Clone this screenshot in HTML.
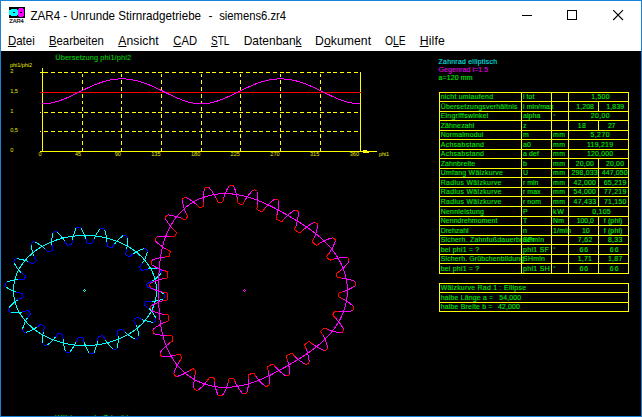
<!DOCTYPE html>
<html><head><meta charset="utf-8"><title>ZAR4 - Unrunde Stirnradgetriebe - siemens6.zr4</title>
<style>
html,body{margin:0;padding:0;background:#000;overflow:hidden}
svg{display:block}
text{white-space:pre}
</style></head><body>
<svg width="642" height="417" viewBox="0 0 642 417">
<rect x="0" y="0" width="642" height="417" fill="#1883d7"/>
<rect x="1" y="1" width="640" height="50" fill="#ffffff"/>
<rect x="1" y="51" width="640" height="365" fill="#000000"/>
<g id="icon">
<rect x="9" y="7" width="16" height="11" fill="#000"/>
<rect x="9" y="10" width="10" height="5" fill="#00ffff"/>
<rect x="11" y="9" width="6" height="7" fill="#00ffff"/>
<rect x="13" y="12" width="2" height="1" fill="#000"/>
<rect x="18" y="9" width="6" height="7" fill="#ff00ff"/>
<rect x="19" y="8" width="4" height="9" fill="#ff00ff"/>
<rect x="20" y="12" width="2" height="1" fill="#000"/>
<text x="9.2" y="23" font-size="5.2" textLength="14.5" lengthAdjust="spacingAndGlyphs" fill="#000" stroke="#000" stroke-width="0.15" font-family='"Liberation Sans", sans-serif'>ZAR4</text>
</g>
<g font-family='"Liberation Sans", sans-serif'>
<text x="30.40" y="19.7" font-size="12.2" fill="#000" textLength="170.70" lengthAdjust="spacingAndGlyphs">ZAR4 - Unrunde Stirnradgetriebe</text>
<text x="208.40" y="19.70" font-size="12.2" fill="#000">-</text>
<text x="219.20" y="19.7" font-size="12.2" fill="#000" textLength="66.90" lengthAdjust="spacingAndGlyphs">siemens6.zr4</text>
<path d="M522 15.5H532" stroke="#000" stroke-width="1" fill="none"/>
<rect x="567.5" y="10.5" width="9" height="9" stroke="#000" stroke-width="1" fill="none"/>
<path d="M613.2 10.2L623 20M623 10.2L613.2 20" stroke="#000" stroke-width="1.1" fill="none"/>
<text x="7.90" y="44.8" font-size="12.2" fill="#000" textLength="26.80" lengthAdjust="spacingAndGlyphs">Datei</text>
<rect x="7.90" y="46" width="8.29" height="1" fill="#000"/>
<text x="49.00" y="44.8" font-size="12.2" fill="#000" textLength="54.80" lengthAdjust="spacingAndGlyphs">Bearbeiten</text>
<rect x="49.00" y="46" width="7.56" height="1" fill="#000"/>
<text x="118.20" y="44.8" font-size="12.2" fill="#000" textLength="40.50" lengthAdjust="spacing">Ansicht</text>
<rect x="118.20" y="46" width="8.14" height="1" fill="#000"/>
<text x="173.30" y="44.8" font-size="12.2" fill="#000" textLength="23.70" lengthAdjust="spacingAndGlyphs">CAD</text>
<rect x="173.30" y="46" width="8.11" height="1" fill="#000"/>
<text x="211.00" y="44.8" font-size="12.2" fill="#000" textLength="18.40" lengthAdjust="spacingAndGlyphs">STL</text>
<rect x="211.00" y="46" width="6.69" height="1" fill="#000"/>
<text x="243.70" y="44.8" font-size="12.2" fill="#000" textLength="57.90" lengthAdjust="spacingAndGlyphs">Datenbank</text>
<rect x="295.61" y="46" width="5.99" height="1" fill="#000"/>
<text x="315.00" y="44.8" font-size="12.2" fill="#000" textLength="56.10" lengthAdjust="spacing">Dokument</text>
<rect x="323.88" y="46" width="6.79" height="1" fill="#000"/>
<text x="385.10" y="44.8" font-size="12.2" fill="#000" textLength="20.60" lengthAdjust="spacingAndGlyphs">OLE</text>
<rect x="393.11" y="46" width="5.73" height="1" fill="#000"/>
<text x="419.70" y="44.8" font-size="12.2" fill="#000" textLength="25.20" lengthAdjust="spacing">Hilfe</text>
<rect x="419.70" y="46" width="8.81" height="1" fill="#000"/>
</g>
<g id="plot" fill="none" stroke-width="1" shape-rendering="crispEdges">
<path d="M40.4 131.75H360.0" stroke="#ffff00" stroke-dasharray="4 2.73" stroke-dashoffset="3.06"/>
<path d="M40.4 112.00H360.0" stroke="#ffff00" stroke-dasharray="4 2.73" stroke-dashoffset="3.06"/>
<path d="M40.4 72.50H360.0" stroke="#ffff00" stroke-dasharray="4 2.73" stroke-dashoffset="3.06"/>
<path d="M82.19 151.5V72.50" stroke="#ffff00" stroke-dasharray="3.6 3.15"/>
<path d="M121.88 151.5V72.50" stroke="#ffff00" stroke-dasharray="3.6 3.15"/>
<path d="M161.56 151.5V72.50" stroke="#ffff00" stroke-dasharray="3.6 3.15"/>
<path d="M201.25 151.5V72.50" stroke="#ffff00" stroke-dasharray="3.6 3.15"/>
<path d="M240.94 151.5V72.50" stroke="#ffff00" stroke-dasharray="3.6 3.15"/>
<path d="M280.62 151.5V72.50" stroke="#ffff00" stroke-dasharray="3.6 3.15"/>
<path d="M320.31 151.5V72.50" stroke="#ffff00" stroke-dasharray="3.6 3.15"/>
<path d="M42.5 68V152M40.4 151.5H377M360.5 72.00V152" stroke="#ffff00"/>
<path d="M42.5 68L41.2 73H43.8Z" fill="#ffff00" stroke="none"/>
<path d="M374 151.5L363 150V153.6Z" fill="#ffff00" stroke="none"/>
<path d="M40.4 92.25H360.5" stroke="#ff0000"/>
<path d="M42.50 103.79L44.26 103.76L46.03 103.66L47.79 103.48L49.56 103.24L51.32 102.94L53.08 102.57L54.85 102.14L56.61 101.66L58.38 101.12L60.14 100.52L61.90 99.89L63.67 99.20L65.43 98.48L67.19 97.73L68.96 96.94L70.72 96.13L72.49 95.30L74.25 94.46L76.01 93.60L77.78 92.73L79.54 91.86L81.31 90.99L83.07 90.13L84.83 89.28L86.60 88.44L88.36 87.61L90.12 86.81L91.89 86.03L93.65 85.28L95.42 84.56L97.18 83.87L98.94 83.22L100.71 82.60L102.47 82.03L104.24 81.50L106.00 81.01L107.76 80.57L109.53 80.18L111.29 79.84L113.06 79.55L114.82 79.31L116.58 79.12L118.35 78.99L120.11 78.90L121.88 78.88L123.64 78.90L125.40 78.99L127.17 79.12L128.93 79.31L130.69 79.55L132.46 79.84L134.22 80.18L135.99 80.57L137.75 81.01L139.51 81.50L141.28 82.03L143.04 82.60L144.81 83.22L146.57 83.87L148.33 84.56L150.10 85.28L151.86 86.03L153.62 86.81L155.39 87.61L157.15 88.44L158.92 89.28L160.68 90.13L162.44 90.99L164.21 91.86L165.97 92.73L167.74 93.60L169.50 94.46L171.26 95.30L173.03 96.13L174.79 96.94L176.56 97.73L178.32 98.48L180.08 99.20L181.85 99.89L183.61 100.52L185.38 101.12L187.14 101.66L188.90 102.14L190.67 102.57L192.43 102.94L194.19 103.24L195.96 103.48L197.72 103.66L199.49 103.76L201.25 103.79L203.01 103.76L204.78 103.66L206.54 103.48L208.31 103.24L210.07 102.94L211.83 102.57L213.60 102.14L215.36 101.66L217.12 101.12L218.89 100.52L220.65 99.89L222.42 99.20L224.18 98.48L225.94 97.73L227.71 96.94L229.47 96.13L231.24 95.30L233.00 94.46L234.76 93.60L236.53 92.73L238.29 91.86L240.06 90.99L241.82 90.13L243.58 89.28L245.35 88.44L247.11 87.61L248.88 86.81L250.64 86.03L252.40 85.28L254.17 84.56L255.93 83.87L257.69 83.22L259.46 82.60L261.22 82.03L262.99 81.50L264.75 81.01L266.51 80.57L268.28 80.18L270.04 79.84L271.81 79.55L273.57 79.31L275.33 79.12L277.10 78.99L278.86 78.90L280.62 78.88L282.39 78.90L284.15 78.99L285.92 79.12L287.68 79.31L289.44 79.55L291.21 79.84L292.97 80.18L294.74 80.57L296.50 81.01L298.26 81.50L300.03 82.03L301.79 82.60L303.56 83.22L305.32 83.87L307.08 84.56L308.85 85.28L310.61 86.03L312.38 86.81L314.14 87.61L315.90 88.44L317.67 89.28L319.43 90.13L321.19 90.99L322.96 91.86L324.72 92.73L326.49 93.60L328.25 94.46L330.01 95.30L331.78 96.13L333.54 96.94L335.31 97.73L337.07 98.48L338.83 99.20L340.60 99.89L342.36 100.52L344.12 101.12L345.89 101.66L347.65 102.14L349.42 102.57L351.18 102.94L352.94 103.24L354.71 103.48L356.47 103.66L358.24 103.76L360.00 103.79" stroke="#ff00ff"/>
</g>
<g font-family='"Liberation Sans", sans-serif'>
<text x="55.30" y="60.20" font-size="7.4" fill="#00e000" textLength="75.70" lengthAdjust="spacing">Übersetzung phi1/phi2</text>
<text x="10.00" y="66.70" font-size="5.6" fill="#e8e800" textLength="22.00" lengthAdjust="spacing">phi1/phi2</text>
<text x="10.20" y="73.10" font-size="5.6" fill="#e8e800">2</text>
<text x="10.20" y="92.85" font-size="5.6" fill="#e8e800">1,5</text>
<text x="10.20" y="112.60" font-size="5.6" fill="#e8e800">1</text>
<text x="10.20" y="132.35" font-size="5.6" fill="#e8e800">0,5</text>
<text x="10.20" y="152.10" font-size="5.6" fill="#e8e800">0</text>
<text x="41.50" y="156.00" font-size="5.6" fill="#e8e800" text-anchor="end">0</text>
<text x="81.19" y="156.00" font-size="5.6" fill="#e8e800" text-anchor="end">45</text>
<text x="120.88" y="156.00" font-size="5.6" fill="#e8e800" text-anchor="end">90</text>
<text x="160.56" y="156.00" font-size="5.6" fill="#e8e800" text-anchor="end">135</text>
<text x="200.25" y="156.00" font-size="5.6" fill="#e8e800" text-anchor="end">180</text>
<text x="239.94" y="156.00" font-size="5.6" fill="#e8e800" text-anchor="end">225</text>
<text x="279.62" y="156.00" font-size="5.6" fill="#e8e800" text-anchor="end">270</text>
<text x="319.31" y="156.00" font-size="5.6" fill="#e8e800" text-anchor="end">315</text>
<text x="359.00" y="156.00" font-size="5.6" fill="#e8e800" text-anchor="end">360</text>
<text x="379.00" y="156.00" font-size="5.6" fill="#e8e800" textLength="10.00" lengthAdjust="spacing">phi1</text>
</g>
<g id="gears" fill="none" stroke-width="1" stroke-linejoin="round" shape-rendering="crispEdges">
<path d="M163.99 293.92L164.82 295.45L164.57 297.53L163.41 298.82M152.03 301.44L150.20 301.47L148.39 301.40L146.59 301.21L145.71 301.79L144.57 304.34L144.85 305.35L146.33 306.39L147.75 307.52L149.11 308.74M155.98 318.19L156.01 319.92L154.84 321.65L153.22 322.25M141.84 319.41L140.37 318.76L138.93 318.05L137.54 317.27L136.46 317.43L134.07 319.57L133.91 320.65L134.69 322.03L135.42 323.47L136.08 324.94M138.97 336.30L138.38 337.92L136.66 339.10L134.95 339.06M125.29 332.36L124.22 331.36L123.19 330.34L122.21 329.28L121.10 329.08L117.96 330.50L117.45 331.51L117.69 332.93L117.88 334.37L118.02 335.82M117.45 347.57L116.45 348.95L114.46 349.60L112.84 349.07M105.43 339.91L104.70 338.73L104.01 337.53L103.36 336.32L102.33 335.82L98.85 336.44L98.08 337.30L97.92 338.66L97.73 340.02L97.49 341.39M94.00 352.65L92.69 353.73L90.60 353.87L89.17 352.96M84.22 342.26L83.80 340.95L83.43 339.64L83.09 338.33L82.21 337.58L78.66 337.40L77.70 338.04L77.22 339.32L76.71 340.58L76.15 341.83M70.07 351.93L68.54 352.68L66.48 352.31L65.30 351.09M63.07 339.53L62.99 338.12L62.96 336.71L62.97 335.32L62.30 334.39L58.94 333.40L57.86 333.78L57.07 334.93L56.23 336.05L55.36 337.16M46.90 345.35L45.22 345.68L43.33 344.79L42.49 343.30M43.41 331.59L43.76 330.11L44.17 328.66L44.63 327.23L44.26 326.18L41.40 324.41L40.29 324.46L39.13 325.41L37.93 326.33L36.69 327.20M26.14 332.37L24.44 332.14L22.92 330.70L22.58 329.01M27.23 318.26L28.19 316.85L29.21 315.50L30.30 314.21L30.34 313.14L28.44 310.77L27.43 310.42L25.84 310.98L24.21 311.46L22.55 311.85M10.85 312.38L9.39 311.46L8.59 309.53L8.97 307.83M17.63 300.00L19.27 299.06L20.96 298.24L22.70 297.53L23.18 296.62L22.74 294.00L22.02 293.26L20.16 293.05L18.31 292.71L16.47 292.26M6.01 287.08L5.18 285.55L5.43 283.47L6.59 282.18M17.97 279.56L19.80 279.53L21.61 279.60L23.41 279.79L24.29 279.21L25.43 276.66L25.15 275.65L23.67 274.61L22.25 273.48L20.89 272.26M14.02 262.81L13.99 261.08L15.16 259.35L16.78 258.75M28.16 261.59L29.63 262.24L31.07 262.95L32.46 263.73L33.54 263.57L35.93 261.43L36.09 260.35L35.31 258.97L34.58 257.53L33.92 256.06M31.03 244.70L31.62 243.08L33.34 241.90L35.05 241.94M44.71 248.64L45.78 249.64L46.81 250.66L47.79 251.72L48.90 251.92L52.04 250.50L52.55 249.49L52.31 248.07L52.12 246.63L51.98 245.18M52.55 233.43L53.55 232.05L55.54 231.40L57.16 231.93M64.57 241.09L65.30 242.27L65.99 243.47L66.64 244.68L67.67 245.18L71.15 244.56L71.92 243.70L72.08 242.34L72.27 240.98L72.51 239.61M76.00 228.35L77.31 227.27L79.40 227.13L80.83 228.04M85.78 238.74L86.20 240.05L86.57 241.36L86.91 242.67L87.79 243.42L91.34 243.60L92.30 242.96L92.78 241.68L93.29 240.42L93.85 239.17M99.93 229.07L101.46 228.32L103.52 228.69L104.70 229.91M106.93 241.47L107.01 242.88L107.04 244.29L107.03 245.68L107.70 246.61L111.06 247.60L112.14 247.22L112.93 246.07L113.77 244.95L114.64 243.84M123.10 235.65L124.78 235.32L126.67 236.21L127.51 237.70M126.59 249.41L126.24 250.89L125.83 252.34L125.37 253.77L125.74 254.82L128.60 256.59L129.71 256.54L130.87 255.59L132.07 254.67L133.31 253.80M143.86 248.63L145.56 248.86L147.08 250.30L147.42 251.99M142.77 262.74L141.81 264.15L140.79 265.50L139.70 266.79L139.66 267.86L141.56 270.23L142.57 270.58L144.16 270.02L145.79 269.54L147.45 269.15M159.15 268.62L160.61 269.54L161.41 271.47L161.03 273.17M152.37 281.00L150.73 281.94L149.04 282.76L147.30 283.47L146.82 284.38L147.26 287.00L147.98 287.74L149.84 287.95L151.69 288.29L153.53 288.74" stroke="#0000ff"/>
<path d="M150.64 283.13L149.93 284.35L149.90 286.44L150.59 287.67M163.03 292.33L164.26 292.58L165.49 292.79L166.72 292.97L167.51 293.76L167.55 299.18L166.80 300.00L165.57 300.23L164.35 300.49L163.13 300.79M150.89 305.95L150.25 307.20L150.36 309.29L151.13 310.47M163.85 314.32L165.09 314.49L166.33 314.62L167.57 314.71L168.41 315.45L168.80 320.16L168.17 321.08L167.00 321.48L165.82 321.92L164.66 322.39M153.29 329.26L152.84 330.60L153.25 332.65L154.18 333.71M167.32 335.68L168.58 335.66L169.82 335.61L171.06 335.53L172.00 336.14L173.04 339.83L172.66 340.88L171.62 341.56L170.59 342.27L169.58 343.01M160.25 352.48L160.15 353.88L161.05 355.77L162.21 356.57M175.43 355.23L176.64 354.91L177.84 354.56L179.02 354.17L180.08 354.53L181.79 357.18L181.77 358.30L181.01 359.27L180.27 360.28L179.55 361.31M173.81 373.30L174.17 374.66L175.64 376.15L176.99 376.53M189.06 370.97L190.10 370.27L191.12 369.54L192.11 368.79L193.23 368.79L195.53 370.42L195.92 371.47L195.56 372.66L195.24 373.86L194.95 375.08M193.96 388.34L194.79 389.47L196.69 390.33L198.10 390.19M207.32 380.62L208.03 379.59L208.72 378.54L209.37 377.48L210.41 377.07L213.29 377.70L214.02 378.55L214.10 379.79L214.22 381.03L214.37 382.28M218.07 395.04L219.24 395.82L221.33 395.96L222.59 395.34M227.89 383.15L228.21 381.94L228.48 380.72L228.72 379.50L229.55 378.75L233.01 378.31L233.96 378.91L234.39 380.08L234.86 381.24L235.36 382.39M242.56 393.56L243.91 393.97L245.94 393.50L246.98 392.54M248.57 379.35L248.52 378.10L248.43 376.85L248.31 375.61L248.90 374.66L252.91 373.10L253.96 373.51L254.60 374.58L255.28 375.62L256.00 376.65M265.21 386.24L266.61 386.38L268.52 385.53L269.35 384.39M268.38 371.14L268.09 369.91L267.77 368.71L267.41 367.52L267.80 366.47L272.36 364.01L273.43 364.32L274.17 365.32L274.95 366.30L275.76 367.26M285.81 375.95L287.22 375.96L289.04 374.94L289.76 373.73M287.57 360.63L287.18 359.44L286.74 358.26L286.28 357.11L286.57 356.03L291.24 353.28L292.33 353.53L293.14 354.47L293.97 355.40L294.84 356.31M305.44 364.33L306.84 364.25L308.60 363.11L309.24 361.85M306.20 348.92L305.73 347.76L305.22 346.62L304.68 345.49L304.90 344.40L308.78 341.70L309.89 341.79L310.83 342.61L311.79 343.40L312.78 344.17M324.42 350.58L325.80 350.30L327.37 348.91L327.83 347.58M322.95 335.22L322.31 334.14L321.65 333.08L320.95 332.05L321.01 330.94L323.68 328.19L324.78 327.99L325.89 328.56L327.02 329.09L328.17 329.59M341.03 332.92L342.30 332.31L343.48 330.59L343.59 329.18M335.82 318.41L334.93 317.52L334.02 316.66L333.09 315.83L332.88 314.73L334.31 311.92L335.29 311.38L336.52 311.55L337.76 311.69L339.01 311.79M352.26 310.76L353.26 309.77L353.81 307.75L353.46 306.39M342.60 298.73L341.48 298.17L340.34 297.66L339.19 297.18L338.63 296.21L338.89 293.40L339.60 292.53L340.81 292.25L342.02 291.93L343.22 291.57M355.19 285.79L355.76 284.50L355.54 282.43L354.72 281.28M341.82 278.09L340.57 277.98L339.32 277.91L338.08 277.88L337.20 277.19L336.31 274.37L336.68 273.32L337.71 272.63L338.73 271.90L339.73 271.15M348.94 261.57L349.03 260.16L348.10 258.29L346.93 257.50M333.73 259.00L332.52 259.34L331.33 259.71L330.15 260.11L329.09 259.76L326.97 256.98L327.03 255.86L327.82 254.91L328.59 253.92L329.33 252.91M335.42 241.10L335.10 239.72L333.67 238.19L332.33 237.78M320.11 242.99L319.04 243.65L318.01 244.35L317.00 245.07L315.88 245.05L312.52 242.34L312.36 241.23L312.96 240.14L313.52 239.03L314.06 237.89M317.76 225.13L317.18 223.85L315.49 222.62L314.09 222.47M303.10 229.93L302.18 230.78L301.30 231.67L300.44 232.57L299.34 232.76L294.93 230.04L294.67 228.95L295.16 227.81L295.62 226.65L296.05 225.47M298.56 212.42L297.87 211.19L296.08 210.13L294.67 210.10M284.40 218.54L283.57 219.48L282.77 220.44L282.01 221.42L280.92 221.71L276.21 219.03L275.88 217.97L276.30 216.79L276.68 215.61L277.03 214.40M278.69 201.22L277.92 200.04L276.06 199.09L274.65 199.16M264.96 208.25L264.19 209.24L263.45 210.25L262.75 211.28L261.69 211.64L257.42 209.62L256.94 208.61L257.18 207.39L257.39 206.16L257.56 204.92M257.30 191.63L256.36 190.58L254.38 189.91L253.00 190.18M244.73 200.58L244.11 201.67L243.53 202.78L242.98 203.90L241.98 204.40L238.27 203.46L237.55 202.60L237.49 201.36L237.39 200.12L237.25 198.87M233.70 186.06L232.54 185.27L230.46 185.11L229.18 185.72M223.73 197.84L223.41 199.05L223.12 200.26L222.86 201.48L222.02 202.22L218.88 202.38L217.92 201.80L217.45 200.65L216.95 199.51L216.41 198.37M208.89 187.42L207.53 187.05L205.51 187.58L204.50 188.56M203.30 201.80L203.39 203.05L203.51 204.29L203.67 205.53L203.11 206.50L200.55 207.68L199.45 207.49L198.59 206.59L197.71 205.71L196.80 204.85M185.81 197.38L184.40 197.53L182.71 198.76L182.14 200.04M185.83 212.81L186.36 213.94L186.93 215.06L187.53 216.15L187.36 217.25L185.38 219.44L184.28 219.65L183.16 219.10L182.03 218.58L180.87 218.09M167.97 214.92L166.71 215.55L165.55 217.29L165.45 218.70M173.36 229.37L174.26 230.25L175.18 231.10L176.12 231.91L176.35 233.01L175.00 236.23L174.01 236.75L172.78 236.54L171.54 236.37L170.29 236.23M157.02 236.88L156.00 237.84L155.38 239.84L155.69 241.21M166.33 249.19L167.44 249.77L168.56 250.32L169.69 250.83L170.23 251.82L169.56 256.08L168.69 256.77L167.44 256.80L166.20 256.87L164.95 256.97M152.04 260.15L151.22 261.30L151.00 263.37L151.57 264.66M163.53 270.45L164.74 270.81L165.94 271.13L167.15 271.42L167.87 272.28L167.72 277.47L166.91 278.24L165.67 278.38L164.44 278.56L163.20 278.78" stroke="#ff0000"/>
<path d="M156.55 290.50L156.54 291.19L156.53 291.88L156.50 292.57L156.46 293.26L156.41 293.95L156.35 294.64L156.27 295.33L156.19 296.02L156.09 296.71L155.99 297.40L155.87 298.08L155.74 298.77L155.60 299.45L155.45 300.13L155.28 300.81L155.11 301.49L154.92 302.16L154.73 302.84L154.52 303.51L154.30 304.18L154.07 304.85L153.83 305.52L153.58 306.18L153.32 306.84L153.05 307.50L152.76 308.16L152.47 308.81L152.17 309.46L151.85 310.11L151.53 310.75L151.19 311.40L150.84 312.03L150.49 312.67L150.12 313.30L149.74 313.93L149.35 314.55L148.95 315.17L148.55 315.79L148.13 316.40L147.70 317.01L147.26 317.61L146.81 318.21L146.36 318.80L145.89 319.40L145.41 319.98L144.93 320.56L144.43 321.14L143.92 321.71L143.41 322.28L142.89 322.84L142.35 323.40L141.81 323.95L141.26 324.49L140.70 325.04L140.13 325.57L139.55 326.10L138.97 326.63L138.37 327.14L137.77 327.66L137.16 328.16L136.54 328.66L135.91 329.16L135.27 329.65L134.63 330.13L133.98 330.61L133.32 331.08L132.65 331.54L131.98 332.00L131.30 332.45L130.61 332.89L129.91 333.33L129.21 333.76L128.50 334.19L127.78 334.60L127.06 335.01L126.33 335.41L125.59 335.81L124.84 336.20L124.09 336.58L123.34 336.95L122.58 337.32L121.81 337.68L121.03 338.03L120.25 338.38L119.47 338.71L118.68 339.04L117.88 339.37L117.08 339.68L116.28 339.99L115.46 340.28L114.65 340.57L113.83 340.86L113.00 341.13L112.17 341.40L111.34 341.66L110.50 341.91L109.66 342.15L108.81 342.38L107.96 342.61L107.11 342.83L106.25 343.04L105.39 343.24L104.53 343.43L103.66 343.62L102.79 343.79L101.92 343.96L101.05 344.12L100.17 344.27L99.29 344.41L98.41 344.55L97.52 344.67L96.64 344.79L95.75 344.90L94.86 345.00L93.97 345.09L93.07 345.17L92.18 345.24L91.29 345.31L90.39 345.36L89.49 345.41L88.59 345.45L87.70 345.48L86.80 345.50L85.90 345.52L85.00 345.52L84.10 345.52L83.20 345.50L82.30 345.48L81.41 345.45L80.51 345.41L79.61 345.36L78.71 345.31L77.82 345.24L76.93 345.17L76.03 345.09L75.14 345.00L74.25 344.90L73.36 344.79L72.48 344.67L71.59 344.55L70.71 344.41L69.83 344.27L68.95 344.12L68.08 343.96L67.21 343.79L66.34 343.62L65.47 343.43L64.61 343.24L63.75 343.04L62.89 342.83L62.04 342.61L61.19 342.38L60.34 342.15L59.50 341.91L58.66 341.66L57.83 341.40L57.00 341.13L56.17 340.86L55.35 340.57L54.54 340.28L53.72 339.99L52.92 339.68L52.12 339.37L51.32 339.04L50.53 338.71L49.75 338.38L48.97 338.03L48.19 337.68L47.42 337.32L46.66 336.95L45.91 336.58L45.16 336.20L44.41 335.81L43.67 335.41L42.94 335.01L42.22 334.60L41.50 334.19L40.79 333.76L40.09 333.33L39.39 332.89L38.70 332.45L38.02 332.00L37.35 331.54L36.68 331.08L36.02 330.61L35.37 330.13L34.73 329.65L34.09 329.16L33.46 328.66L32.84 328.16L32.23 327.66L31.63 327.14L31.03 326.63L30.45 326.10L29.87 325.57L29.30 325.04L28.74 324.49L28.19 323.95L27.65 323.40L27.11 322.84L26.59 322.28L26.08 321.71L25.57 321.14L25.07 320.56L24.59 319.98L24.11 319.40L23.64 318.80L23.19 318.21L22.74 317.61L22.30 317.01L21.87 316.40L21.45 315.79L21.05 315.17L20.65 314.55L20.26 313.93L19.88 313.30L19.51 312.67L19.16 312.03L18.81 311.40L18.47 310.75L18.15 310.11L17.83 309.46L17.53 308.81L17.24 308.16L16.95 307.50L16.68 306.84L16.42 306.18L16.17 305.52L15.93 304.85L15.70 304.18L15.48 303.51L15.27 302.84L15.08 302.16L14.89 301.49L14.72 300.81L14.55 300.13L14.40 299.45L14.26 298.77L14.13 298.08L14.01 297.40L13.91 296.71L13.81 296.02L13.73 295.33L13.65 294.64L13.59 293.95L13.54 293.26L13.50 292.57L13.47 291.88L13.46 291.19L13.45 290.50L13.46 289.81L13.47 289.12L13.50 288.43L13.54 287.74L13.59 287.05L13.65 286.36L13.73 285.67L13.81 284.98L13.91 284.29L14.01 283.60L14.13 282.92L14.26 282.23L14.40 281.55L14.55 280.87L14.72 280.19L14.89 279.51L15.08 278.84L15.27 278.16L15.48 277.49L15.70 276.82L15.93 276.15L16.17 275.48L16.42 274.82L16.68 274.16L16.95 273.50L17.24 272.84L17.53 272.19L17.83 271.54L18.15 270.89L18.47 270.25L18.81 269.60L19.16 268.97L19.51 268.33L19.88 267.70L20.26 267.07L20.65 266.45L21.05 265.83L21.45 265.21L21.87 264.60L22.30 263.99L22.74 263.39L23.19 262.79L23.64 262.20L24.11 261.60L24.59 261.02L25.07 260.44L25.57 259.86L26.08 259.29L26.59 258.72L27.11 258.16L27.65 257.60L28.19 257.05L28.74 256.51L29.30 255.96L29.87 255.43L30.45 254.90L31.03 254.37L31.63 253.86L32.23 253.34L32.84 252.84L33.46 252.34L34.09 251.84L34.73 251.35L35.37 250.87L36.02 250.39L36.68 249.92L37.35 249.46L38.02 249.00L38.70 248.55L39.39 248.11L40.09 247.67L40.79 247.24L41.50 246.81L42.22 246.40L42.94 245.99L43.67 245.59L44.41 245.19L45.16 244.80L45.91 244.42L46.66 244.05L47.42 243.68L48.19 243.32L48.97 242.97L49.75 242.62L50.53 242.29L51.32 241.96L52.12 241.63L52.92 241.32L53.72 241.01L54.54 240.72L55.35 240.43L56.17 240.14L57.00 239.87L57.83 239.60L58.66 239.34L59.50 239.09L60.34 238.85L61.19 238.62L62.04 238.39L62.89 238.17L63.75 237.96L64.61 237.76L65.47 237.57L66.34 237.38L67.21 237.21L68.08 237.04L68.95 236.88L69.83 236.73L70.71 236.59L71.59 236.45L72.48 236.33L73.36 236.21L74.25 236.10L75.14 236.00L76.03 235.91L76.93 235.83L77.82 235.76L78.71 235.69L79.61 235.64L80.51 235.59L81.41 235.55L82.30 235.52L83.20 235.50L84.10 235.48L85.00 235.48L85.90 235.48L86.80 235.50L87.70 235.52L88.59 235.55L89.49 235.59L90.39 235.64L91.29 235.69L92.18 235.76L93.07 235.83L93.97 235.91L94.86 236.00L95.75 236.10L96.64 236.21L97.52 236.33L98.41 236.45L99.29 236.59L100.17 236.73L101.05 236.88L101.92 237.04L102.79 237.21L103.66 237.38L104.53 237.57L105.39 237.76L106.25 237.96L107.11 238.17L107.96 238.39L108.81 238.62L109.66 238.85L110.50 239.09L111.34 239.34L112.17 239.60L113.00 239.87L113.83 240.14L114.65 240.43L115.46 240.72L116.28 241.01L117.08 241.32L117.88 241.63L118.68 241.96L119.47 242.29L120.25 242.62L121.03 242.97L121.81 243.32L122.58 243.68L123.34 244.05L124.09 244.42L124.84 244.80L125.59 245.19L126.33 245.59L127.06 245.99L127.78 246.40L128.50 246.81L129.21 247.24L129.91 247.67L130.61 248.11L131.30 248.55L131.98 249.00L132.65 249.46L133.32 249.92L133.98 250.39L134.63 250.87L135.27 251.35L135.91 251.84L136.54 252.34L137.16 252.84L137.77 253.34L138.37 253.86L138.97 254.37L139.55 254.90L140.13 255.43L140.70 255.96L141.26 256.51L141.81 257.05L142.35 257.60L142.89 258.16L143.41 258.72L143.92 259.29L144.43 259.86L144.93 260.44L145.41 261.02L145.89 261.60L146.36 262.20L146.81 262.79L147.26 263.39L147.70 263.99L148.13 264.60L148.55 265.21L148.95 265.83L149.35 266.45L149.74 267.07L150.12 267.70L150.49 268.33L150.84 268.97L151.19 269.60L151.53 270.25L151.85 270.89L152.17 271.54L152.47 272.19L152.76 272.84L153.05 273.50L153.32 274.16L153.58 274.82L153.83 275.48L154.07 276.15L154.30 276.82L154.52 277.49L154.73 278.16L154.92 278.84L155.11 279.51L155.28 280.19L155.45 280.87L155.60 281.55L155.74 282.23L155.87 282.92L155.99 283.60L156.09 284.29L156.19 284.98L156.27 285.67L156.35 286.36L156.41 287.05L156.46 287.74L156.50 288.43L156.53 289.12L156.54 289.81Z" stroke="#00ffff"/>
<path d="M153.53 288.74L155.66 289.44L157.78 290.30L159.87 291.34L161.94 292.54L163.99 293.92M152.03 301.44L154.26 301.24L156.52 300.88L158.80 300.36L161.10 299.67L163.41 298.82M149.11 308.74L150.67 310.36L152.14 312.11L153.51 314.00L154.79 316.03L155.98 318.19M141.84 319.41L143.96 320.22L146.15 320.90L148.43 321.47L150.79 321.92L153.22 322.25M136.08 324.94L136.89 327.05L137.59 329.24L138.17 331.51L138.63 333.87L138.97 336.30M125.29 332.36L127.02 333.84L128.85 335.25L130.78 336.59L132.82 337.86L134.95 339.06M118.02 335.82L118.14 338.10L118.14 340.41L118.03 342.76L117.80 345.15L117.45 347.57M105.43 339.91L106.70 341.81L108.08 343.68L109.56 345.51L111.15 347.31L112.84 349.07M97.49 341.39L97.01 343.63L96.42 345.87L95.72 348.12L94.92 350.38L94.00 352.65M84.22 342.26L84.99 344.42L85.87 346.56L86.86 348.70L87.96 350.84L89.17 352.96M76.15 341.83L75.15 343.89L74.04 345.93L72.82 347.95L71.50 349.95L70.07 351.93M63.07 339.53L63.29 341.80L63.62 344.09L64.07 346.40L64.63 348.74L65.30 351.09M55.36 337.16L53.87 338.90L52.28 340.59L50.59 342.22L48.80 343.81L46.90 345.35M43.41 331.59L42.99 333.82L42.69 336.11L42.50 338.45L42.44 340.85L42.49 343.30M36.69 327.20L34.77 328.41L32.75 329.53L30.64 330.57L28.44 331.51L26.14 332.37M27.23 318.26L26.07 320.20L25.03 322.24L24.10 324.39L23.29 326.65L22.58 329.01M22.55 311.85L20.33 312.24L18.05 312.49L15.71 312.59L13.31 312.56L10.85 312.38M17.63 300.00L15.76 301.25L13.96 302.66L12.23 304.22L10.57 305.95L8.97 307.83M16.47 292.26L14.34 291.56L12.22 290.70L10.13 289.66L8.06 288.46L6.01 287.08M17.97 279.56L15.74 279.76L13.48 280.12L11.20 280.64L8.90 281.33L6.59 282.18M20.89 272.26L19.33 270.64L17.86 268.89L16.49 267.00L15.21 264.97L14.02 262.81M28.16 261.59L26.04 260.78L23.85 260.10L21.57 259.53L19.21 259.08L16.78 258.75M33.92 256.06L33.11 253.95L32.41 251.76L31.83 249.49L31.37 247.13L31.03 244.70M44.71 248.64L42.98 247.16L41.15 245.75L39.22 244.41L37.18 243.14L35.05 241.94M51.98 245.18L51.86 242.90L51.86 240.59L51.97 238.24L52.20 235.85L52.55 233.43M64.57 241.09L63.30 239.19L61.92 237.32L60.44 235.49L58.85 233.69L57.16 231.93M72.51 239.61L72.99 237.37L73.58 235.13L74.28 232.88L75.08 230.62L76.00 228.35M85.78 238.74L85.01 236.58L84.13 234.44L83.14 232.30L82.04 230.16L80.83 228.04M93.85 239.17L94.85 237.11L95.96 235.07L97.18 233.05L98.50 231.05L99.93 229.07M106.93 241.47L106.71 239.20L106.38 236.91L105.93 234.60L105.37 232.26L104.70 229.91M114.64 243.84L116.13 242.10L117.72 240.41L119.41 238.78L121.20 237.19L123.10 235.65M126.59 249.41L127.01 247.18L127.31 244.89L127.50 242.55L127.56 240.15L127.51 237.70M133.31 253.80L135.23 252.59L137.25 251.47L139.36 250.43L141.56 249.49L143.86 248.63M142.77 262.74L143.93 260.80L144.97 258.76L145.90 256.61L146.71 254.35L147.42 251.99M147.45 269.15L149.67 268.76L151.95 268.51L154.29 268.41L156.69 268.44L159.15 268.62M152.37 281.00L154.24 279.75L156.04 278.34L157.77 276.78L159.43 275.05L161.03 273.17" stroke="#00ffff"/>
<path d="M158.58 290.50L158.59 291.10L158.59 291.70L158.59 292.30L158.59 292.90L158.60 293.50L158.60 294.10L158.61 294.70L158.61 295.30L158.62 295.90L158.63 296.50L158.64 297.10L158.65 297.70L158.66 298.29L158.67 298.89L158.69 299.49L158.70 300.09L158.72 300.69L158.73 301.29L158.75 301.88L158.77 302.48L158.79 303.08L158.81 303.68L158.84 304.27L158.86 304.87L158.88 305.47L158.91 306.06L158.94 306.66L158.97 307.25L159.00 307.85L159.03 308.44L159.07 309.03L159.10 309.63L159.14 310.22L159.18 310.81L159.22 311.40L159.26 311.99L159.30 312.58L159.35 313.17L159.39 313.76L159.44 314.35L159.49 314.94L159.55 315.53L159.60 316.11L159.66 316.70L159.71 317.28L159.78 317.87L159.84 318.45L159.90 319.03L159.97 319.61L160.04 320.19L160.11 320.77L160.18 321.35L160.26 321.92L160.34 322.50L160.42 323.07L160.50 323.64L160.58 324.22L160.67 324.79L160.76 325.36L160.85 325.92L160.95 326.49L161.04 327.06L161.14 327.62L161.25 328.18L161.35 328.74L161.46 329.30L161.57 329.86L161.68 330.41L161.79 330.97L161.91 331.52L162.03 332.07L162.16 332.62L162.28 333.17L162.41 333.72L162.54 334.26L162.67 334.80L162.81 335.34L162.95 335.88L163.09 336.42L163.24 336.95L163.38 337.48L163.53 338.01L163.69 338.54L163.84 339.07L164.00 339.59L164.16 340.11L164.33 340.63L164.50 341.15L164.67 341.67L164.84 342.18L165.01 342.69L165.19 343.20L165.37 343.71L165.56 344.21L165.74 344.71L165.93 345.21L166.12 345.71L166.32 346.20L166.52 346.70L166.72 347.19L166.92 347.67L167.13 348.16L167.34 348.64L167.55 349.12L167.76 349.60L167.98 350.07L168.20 350.55L168.42 351.02L168.65 351.48L168.87 351.95L169.10 352.41L169.34 352.87L169.57 353.32L169.81 353.78L170.05 354.23L170.30 354.68L170.54 355.12L170.79 355.57L171.04 356.01L171.30 356.44L171.56 356.88L171.81 357.31L172.08 357.74L172.34 358.16L172.61 358.59L172.88 359.01L173.15 359.43L173.43 359.84L173.70 360.25L173.98 360.66L174.26 361.07L174.55 361.47L174.84 361.87L175.13 362.27L175.42 362.67L175.71 363.06L176.01 363.45L176.31 363.83L176.61 364.22L176.91 364.60L177.22 364.97L177.53 365.35L177.84 365.72L178.15 366.09L178.47 366.45L178.78 366.81L179.10 367.17L179.43 367.53L179.75 367.88L180.08 368.23L180.41 368.58L180.74 368.93L181.07 369.27L181.41 369.61L181.75 369.94L182.08 370.28L182.43 370.60L182.77 370.93L183.12 371.25L183.47 371.57L183.82 371.89L184.17 372.21L184.52 372.52L184.88 372.83L185.24 373.13L185.60 373.43L185.96 373.73L186.33 374.03L186.70 374.32L187.07 374.61L187.44 374.90L187.81 375.18L188.19 375.46L188.56 375.74L188.94 376.01L189.32 376.28L189.71 376.55L190.09 376.82L190.48 377.08L190.87 377.34L191.26 377.59L191.65 377.84L192.04 378.09L192.44 378.34L192.84 378.58L193.24 378.82L193.64 379.06L194.04 379.29L194.45 379.52L194.86 379.75L195.27 379.97L195.68 380.19L196.09 380.41L196.51 380.62L196.92 380.83L197.34 381.04L197.76 381.25L198.18 381.45L198.60 381.65L199.03 381.84L199.46 382.03L199.88 382.22L200.32 382.40L200.75 382.59L201.18 382.77L201.62 382.94L202.05 383.11L202.49 383.28L202.93 383.45L203.37 383.61L203.82 383.77L204.26 383.92L204.71 384.07L205.16 384.22L205.61 384.37L206.06 384.51L206.51 384.65L206.97 384.78L207.42 384.91L207.88 385.04L208.34 385.17L208.80 385.29L209.26 385.41L209.73 385.52L210.19 385.63L210.66 385.74L211.13 385.85L211.60 385.95L212.07 386.05L212.54 386.14L213.01 386.23L213.49 386.32L213.97 386.40L214.44 386.48L214.92 386.56L215.40 386.63L215.89 386.70L216.37 386.77L216.86 386.83L217.34 386.89L217.83 386.94L218.32 387.00L218.81 387.04L219.30 387.09L219.79 387.13L220.29 387.17L220.78 387.20L221.28 387.23L221.78 387.26L222.27 387.28L222.77 387.30L223.28 387.32L223.78 387.33L224.28 387.34L224.79 387.35L225.29 387.35L225.80 387.35L226.31 387.34L226.81 387.33L227.32 387.32L227.84 387.30L228.35 387.28L228.86 387.26L229.37 387.23L229.89 387.20L230.40 387.17L230.92 387.13L231.44 387.09L231.96 387.04L232.48 386.99L233.00 386.94L233.52 386.88L234.04 386.82L234.56 386.76L235.09 386.69L235.61 386.62L236.13 386.54L236.66 386.46L237.19 386.38L237.71 386.30L238.24 386.21L238.77 386.12L239.30 386.02L239.83 385.92L240.36 385.82L240.89 385.71L241.42 385.60L241.95 385.48L242.48 385.37L243.02 385.25L243.55 385.12L244.08 384.99L244.62 384.86L245.15 384.73L245.68 384.59L246.22 384.45L246.75 384.30L247.29 384.15L247.83 384.00L248.36 383.85L248.90 383.69L249.43 383.53L249.97 383.36L250.51 383.19L251.04 383.02L251.58 382.85L252.12 382.67L252.66 382.49L253.19 382.31L253.73 382.12L254.27 381.93L254.81 381.74L255.34 381.54L255.88 381.34L256.42 381.14L256.96 380.94L257.49 380.73L258.03 380.52L258.57 380.31L259.11 380.09L259.64 379.88L260.18 379.66L260.72 379.43L261.25 379.21L261.79 378.98L262.32 378.75L262.86 378.52L263.40 378.28L263.93 378.05L264.47 377.81L265.00 377.56L265.54 377.32L266.07 377.07L266.60 376.83L267.14 376.58L267.67 376.33L268.21 376.07L268.74 375.82L269.27 375.56L269.80 375.30L270.33 375.04L270.87 374.78L271.40 374.51L271.93 374.24L272.46 373.98L272.99 373.71L273.52 373.44L274.05 373.17L274.58 372.89L275.11 372.62L275.64 372.34L276.16 372.06L276.69 371.78L277.22 371.50L277.75 371.22L278.27 370.94L278.80 370.66L279.32 370.37L279.85 370.09L280.38 369.80L280.90 369.51L281.42 369.23L281.95 368.94L282.47 368.65L283.00 368.35L283.52 368.06L284.04 367.77L284.56 367.47L285.09 367.18L285.61 366.88L286.13 366.59L286.65 366.29L287.17 365.99L287.69 365.69L288.21 365.39L288.73 365.09L289.24 364.79L289.76 364.49L290.28 364.19L290.80 363.89L291.31 363.58L291.83 363.28L292.35 362.97L292.86 362.66L293.37 362.36L293.89 362.05L294.40 361.74L294.91 361.43L295.43 361.12L295.94 360.81L296.45 360.50L296.96 360.19L297.47 359.87L297.98 359.56L298.48 359.24L298.99 358.93L299.50 358.61L300.00 358.29L300.51 357.97L301.01 357.65L301.51 357.33L302.01 357.01L302.51 356.69L303.01 356.36L303.51 356.04L304.01 355.71L304.50 355.38L305.00 355.06L305.49 354.73L305.98 354.40L306.47 354.06L306.96 353.73L307.45 353.40L307.93 353.06L308.42 352.73L308.90 352.39L309.38 352.05L309.86 351.71L310.34 351.37L310.82 351.02L311.29 350.68L311.77 350.33L312.24 349.99L312.71 349.64L313.17 349.29L313.64 348.94L314.10 348.59L314.56 348.23L315.02 347.88L315.48 347.52L315.93 347.16L316.39 346.80L316.84 346.44L317.28 346.08L317.73 345.72L318.17 345.35L318.61 344.99L319.05 344.62L319.49 344.25L319.92 343.88L320.35 343.50L320.78 343.13L321.20 342.75L321.62 342.38L322.04 342.00L322.46 341.62L322.87 341.24L323.28 340.86L323.69 340.47L324.10 340.09L324.50 339.70L324.90 339.31L325.30 338.92L325.69 338.53L326.08 338.14L326.47 337.74L326.85 337.35L327.23 336.95L327.61 336.55L327.98 336.15L328.35 335.75L328.72 335.35L329.09 334.95L329.45 334.54L329.80 334.13L330.16 333.73L330.51 333.32L330.86 332.91L331.20 332.50L331.54 332.08L331.88 331.67L332.22 331.25L332.55 330.84L332.87 330.42L333.20 330.00L333.52 329.58L333.83 329.16L334.15 328.74L334.46 328.32L334.76 327.89L335.06 327.47L335.36 327.04L335.66 326.61L335.95 326.18L336.24 325.75L336.52 325.32L336.80 324.89L337.08 324.46L337.35 324.03L337.62 323.59L337.89 323.16L338.15 322.72L338.41 322.28L338.66 321.84L338.92 321.40L339.16 320.96L339.41 320.52L339.65 320.08L339.88 319.64L340.12 319.20L340.35 318.75L340.57 318.31L340.79 317.86L341.01 317.42L341.23 316.97L341.44 316.52L341.64 316.07L341.85 315.62L342.05 315.17L342.24 314.72L342.43 314.27L342.62 313.82L342.81 313.37L342.99 312.92L343.16 312.46L343.34 312.01L343.51 311.55L343.67 311.10L343.84 310.64L343.99 310.19L344.15 309.73L344.30 309.27L344.45 308.82L344.59 308.36L344.73 307.90L344.87 307.44L345.00 306.98L345.13 306.52L345.25 306.06L345.37 305.60L345.49 305.14L345.61 304.68L345.72 304.22L345.82 303.75L345.93 303.29L346.03 302.83L346.12 302.37L346.21 301.90L346.30 301.44L346.39 300.98L346.47 300.51L346.54 300.05L346.62 299.58L346.69 299.12L346.75 298.66L346.82 298.19L346.87 297.72L346.93 297.26L346.98 296.79L347.03 296.33L347.07 295.86L347.11 295.40L347.15 294.93L347.18 294.46L347.21 294.00L347.24 293.53L347.26 293.07L347.28 292.60L347.29 292.13L347.30 291.67L347.31 291.20L347.31 290.73L347.31 290.27L347.31 289.80L347.30 289.33L347.29 288.87L347.28 288.40L347.26 287.93L347.24 287.47L347.21 287.00L347.18 286.54L347.15 286.07L347.11 285.60L347.07 285.14L347.03 284.67L346.98 284.21L346.93 283.74L346.87 283.28L346.82 282.81L346.75 282.34L346.69 281.88L346.62 281.42L346.54 280.95L346.47 280.49L346.39 280.02L346.30 279.56L346.21 279.10L346.12 278.63L346.03 278.17L345.93 277.71L345.82 277.25L345.72 276.78L345.61 276.32L345.49 275.86L345.37 275.40L345.25 274.94L345.13 274.48L345.00 274.02L344.87 273.56L344.73 273.10L344.59 272.64L344.45 272.18L344.30 271.73L344.15 271.27L343.99 270.81L343.84 270.36L343.67 269.90L343.51 269.45L343.34 268.99L343.16 268.54L342.99 268.08L342.81 267.63L342.62 267.18L342.43 266.73L342.24 266.28L342.05 265.83L341.85 265.38L341.64 264.93L341.44 264.48L341.23 264.03L341.01 263.58L340.79 263.14L340.57 262.69L340.35 262.25L340.12 261.80L339.88 261.36L339.65 260.92L339.41 260.48L339.16 260.04L338.92 259.60L338.66 259.16L338.41 258.72L338.15 258.28L337.89 257.84L337.62 257.41L337.35 256.97L337.08 256.54L336.80 256.11L336.52 255.68L336.24 255.25L335.95 254.82L335.66 254.39L335.36 253.96L335.06 253.53L334.76 253.11L334.46 252.68L334.15 252.26L333.83 251.84L333.52 251.42L333.20 251.00L332.87 250.58L332.55 250.16L332.22 249.75L331.88 249.33L331.54 248.92L331.20 248.50L330.86 248.09L330.51 247.68L330.16 247.27L329.80 246.87L329.45 246.46L329.09 246.05L328.72 245.65L328.35 245.25L327.98 244.85L327.61 244.45L327.23 244.05L326.85 243.65L326.47 243.26L326.08 242.86L325.69 242.47L325.30 242.08L324.90 241.69L324.50 241.30L324.10 240.91L323.69 240.53L323.28 240.14L322.87 239.76L322.46 239.38L322.04 239.00L321.62 238.62L321.20 238.25L320.78 237.87L320.35 237.50L319.92 237.12L319.49 236.75L319.05 236.38L318.61 236.01L318.17 235.65L317.73 235.28L317.28 234.92L316.84 234.56L316.39 234.20L315.93 233.84L315.48 233.48L315.02 233.12L314.56 232.77L314.10 232.41L313.64 232.06L313.17 231.71L312.71 231.36L312.24 231.01L311.77 230.67L311.29 230.32L310.82 229.98L310.34 229.63L309.86 229.29L309.38 228.95L308.90 228.61L308.42 228.27L307.93 227.94L307.45 227.60L306.96 227.27L306.47 226.94L305.98 226.60L305.49 226.27L305.00 225.94L304.50 225.62L304.01 225.29L303.51 224.96L303.01 224.64L302.51 224.31L302.01 223.99L301.51 223.67L301.01 223.35L300.51 223.03L300.00 222.71L299.50 222.39L298.99 222.07L298.48 221.76L297.98 221.44L297.47 221.13L296.96 220.81L296.45 220.50L295.94 220.19L295.43 219.88L294.91 219.57L294.40 219.26L293.89 218.95L293.37 218.64L292.86 218.34L292.35 218.03L291.83 217.72L291.31 217.42L290.80 217.11L290.28 216.81L289.76 216.51L289.24 216.21L288.73 215.91L288.21 215.61L287.69 215.31L287.17 215.01L286.65 214.71L286.13 214.41L285.61 214.12L285.09 213.82L284.56 213.53L284.04 213.23L283.52 212.94L283.00 212.65L282.47 212.35L281.95 212.06L281.42 211.77L280.90 211.49L280.38 211.20L279.85 210.91L279.32 210.63L278.80 210.34L278.27 210.06L277.75 209.78L277.22 209.50L276.69 209.22L276.16 208.94L275.64 208.66L275.11 208.38L274.58 208.11L274.05 207.83L273.52 207.56L272.99 207.29L272.46 207.02L271.93 206.76L271.40 206.49L270.87 206.22L270.33 205.96L269.80 205.70L269.27 205.44L268.74 205.18L268.21 204.93L267.67 204.67L267.14 204.42L266.60 204.17L266.07 203.93L265.54 203.68L265.00 203.44L264.47 203.19L263.93 202.95L263.40 202.72L262.86 202.48L262.32 202.25L261.79 202.02L261.25 201.79L260.72 201.57L260.18 201.34L259.64 201.12L259.11 200.91L258.57 200.69L258.03 200.48L257.49 200.27L256.96 200.06L256.42 199.86L255.88 199.66L255.34 199.46L254.81 199.26L254.27 199.07L253.73 198.88L253.19 198.69L252.66 198.51L252.12 198.33L251.58 198.15L251.04 197.98L250.51 197.81L249.97 197.64L249.43 197.47L248.90 197.31L248.36 197.15L247.83 197.00L247.29 196.85L246.75 196.70L246.22 196.55L245.68 196.41L245.15 196.27L244.62 196.14L244.08 196.01L243.55 195.88L243.02 195.75L242.48 195.63L241.95 195.52L241.42 195.40L240.89 195.29L240.36 195.18L239.83 195.08L239.30 194.98L238.77 194.88L238.24 194.79L237.71 194.70L237.19 194.62L236.66 194.54L236.13 194.46L235.61 194.38L235.09 194.31L234.56 194.24L234.04 194.18L233.52 194.12L233.00 194.06L232.48 194.01L231.96 193.96L231.44 193.91L230.92 193.87L230.40 193.83L229.89 193.80L229.37 193.77L228.86 193.74L228.35 193.72L227.84 193.70L227.32 193.68L226.81 193.67L226.31 193.66L225.80 193.65L225.29 193.65L224.79 193.65L224.28 193.66L223.78 193.67L223.28 193.68L222.77 193.70L222.27 193.72L221.78 193.74L221.28 193.77L220.78 193.80L220.29 193.83L219.79 193.87L219.30 193.91L218.81 193.96L218.32 194.00L217.83 194.06L217.34 194.11L216.86 194.17L216.37 194.23L215.89 194.30L215.40 194.37L214.92 194.44L214.44 194.52L213.97 194.60L213.49 194.68L213.01 194.77L212.54 194.86L212.07 194.95L211.60 195.05L211.13 195.15L210.66 195.26L210.19 195.37L209.73 195.48L209.26 195.59L208.80 195.71L208.34 195.83L207.88 195.96L207.42 196.09L206.97 196.22L206.51 196.35L206.06 196.49L205.61 196.63L205.16 196.78L204.71 196.93L204.26 197.08L203.82 197.23L203.37 197.39L202.93 197.55L202.49 197.72L202.05 197.89L201.62 198.06L201.18 198.23L200.75 198.41L200.32 198.60L199.88 198.78L199.46 198.97L199.03 199.16L198.60 199.35L198.18 199.55L197.76 199.75L197.34 199.96L196.92 200.17L196.51 200.38L196.09 200.59L195.68 200.81L195.27 201.03L194.86 201.25L194.45 201.48L194.04 201.71L193.64 201.94L193.24 202.18L192.84 202.42L192.44 202.66L192.04 202.91L191.65 203.16L191.26 203.41L190.87 203.66L190.48 203.92L190.09 204.18L189.71 204.45L189.32 204.72L188.94 204.99L188.56 205.26L188.19 205.54L187.81 205.82L187.44 206.10L187.07 206.39L186.70 206.68L186.33 206.97L185.96 207.27L185.60 207.57L185.24 207.87L184.88 208.17L184.52 208.48L184.17 208.79L183.82 209.11L183.47 209.43L183.12 209.75L182.77 210.07L182.43 210.40L182.08 210.72L181.75 211.06L181.41 211.39L181.07 211.73L180.74 212.07L180.41 212.42L180.08 212.77L179.75 213.12L179.43 213.47L179.10 213.83L178.78 214.19L178.47 214.55L178.15 214.91L177.84 215.28L177.53 215.65L177.22 216.03L176.91 216.40L176.61 216.78L176.31 217.17L176.01 217.55L175.71 217.94L175.42 218.33L175.13 218.73L174.84 219.13L174.55 219.53L174.26 219.93L173.98 220.34L173.70 220.75L173.43 221.16L173.15 221.57L172.88 221.99L172.61 222.41L172.34 222.84L172.08 223.26L171.81 223.69L171.56 224.12L171.30 224.56L171.04 224.99L170.79 225.43L170.54 225.88L170.30 226.32L170.05 226.77L169.81 227.22L169.57 227.68L169.34 228.13L169.10 228.59L168.87 229.05L168.65 229.52L168.42 229.98L168.20 230.45L167.98 230.93L167.76 231.40L167.55 231.88L167.34 232.36L167.13 232.84L166.92 233.33L166.72 233.81L166.52 234.30L166.32 234.80L166.12 235.29L165.93 235.79L165.74 236.29L165.56 236.79L165.37 237.29L165.19 237.80L165.01 238.31L164.84 238.82L164.67 239.33L164.50 239.85L164.33 240.37L164.16 240.89L164.00 241.41L163.84 241.93L163.69 242.46L163.53 242.99L163.38 243.52L163.24 244.05L163.09 244.58L162.95 245.12L162.81 245.66L162.67 246.20L162.54 246.74L162.41 247.28L162.28 247.83L162.16 248.38L162.03 248.93L161.91 249.48L161.79 250.03L161.68 250.59L161.57 251.14L161.46 251.70L161.35 252.26L161.25 252.82L161.14 253.38L161.04 253.94L160.95 254.51L160.85 255.08L160.76 255.64L160.67 256.21L160.58 256.78L160.50 257.36L160.42 257.93L160.34 258.50L160.26 259.08L160.18 259.65L160.11 260.23L160.04 260.81L159.97 261.39L159.90 261.97L159.84 262.55L159.78 263.13L159.71 263.72L159.66 264.30L159.60 264.89L159.55 265.47L159.49 266.06L159.44 266.65L159.39 267.24L159.35 267.83L159.30 268.42L159.26 269.01L159.22 269.60L159.18 270.19L159.14 270.78L159.10 271.37L159.07 271.97L159.03 272.56L159.00 273.15L158.97 273.75L158.94 274.34L158.91 274.94L158.88 275.53L158.86 276.13L158.84 276.73L158.81 277.32L158.79 277.92L158.77 278.52L158.75 279.12L158.73 279.71L158.72 280.31L158.70 280.91L158.69 281.51L158.67 282.11L158.66 282.71L158.65 283.30L158.64 283.90L158.63 284.50L158.62 285.10L158.61 285.70L158.61 286.30L158.60 286.90L158.60 287.50L158.59 288.10L158.59 288.70L158.59 289.30L158.59 289.90L158.58 290.50Z" stroke="#ff00ff"/>
<path d="M163.20 278.78L160.69 279.34L158.18 280.06L155.67 280.93L153.16 281.95L150.64 283.13M163.03 292.33L160.54 291.71L158.05 290.93L155.56 290.00L153.07 288.91L150.59 287.67M163.13 300.79L160.67 301.51L158.21 302.38L155.76 303.42L153.32 304.60L150.89 305.95M163.85 314.32L161.32 313.86L158.78 313.25L156.24 312.48L153.69 311.55L151.13 310.47M164.66 322.39L162.33 323.46L160.02 324.68L157.75 326.06L155.50 327.58L153.29 329.26M167.32 335.68L164.75 335.59L162.15 335.35L159.53 334.95L156.87 334.41L154.18 333.71M169.58 343.01L167.58 344.62L165.65 346.38L163.78 348.27L161.98 350.30L160.25 352.48M175.43 355.23L172.92 355.78L170.34 356.19L167.70 356.45L164.99 356.58L162.21 356.57M179.55 361.31L178.18 363.49L176.93 365.77L175.78 368.17L174.74 370.68L173.81 373.30M189.06 370.97L186.87 372.30L184.56 373.52L182.15 374.63L179.62 375.64L176.99 376.53M194.95 375.08L194.47 377.61L194.13 380.19L193.93 382.84L193.87 385.56L193.96 388.34M207.32 380.62L205.76 382.66L204.05 384.64L202.21 386.55L200.22 388.40L198.10 390.19M214.37 382.28L214.80 384.81L215.38 387.36L216.12 389.91L217.02 392.47L218.07 395.04M227.89 383.15L227.14 385.61L226.24 388.06L225.18 390.49L223.96 392.92L222.59 395.34M235.36 382.39L236.50 384.69L237.79 386.96L239.22 389.20L240.82 391.39L242.56 393.56M248.57 379.35L248.55 381.92L248.39 384.52L248.07 387.16L247.60 389.83L246.98 392.54M256.00 376.65L257.56 378.70L259.26 380.68L261.10 382.59L263.08 384.45L265.21 386.24M268.38 371.14L268.86 373.66L269.19 376.25L269.39 378.90L269.44 381.61L269.35 384.39M275.76 367.26L277.50 369.15L279.37 370.96L281.38 372.70L283.53 374.36L285.81 375.95M287.57 360.63L288.28 363.09L288.86 365.64L289.29 368.26L289.59 370.96L289.76 373.73M294.84 356.31L296.70 358.08L298.69 359.77L300.81 361.37L303.06 362.89L305.44 364.33M306.20 348.92L307.07 351.34L307.81 353.84L308.42 356.43L308.89 359.10L309.24 361.85M312.78 344.17L314.88 345.66L317.09 347.04L319.42 348.32L321.86 349.50L324.42 350.58M322.95 335.22L324.16 337.49L325.25 339.86L326.23 342.33L327.09 344.90L327.83 347.58M328.17 329.59L330.57 330.52L333.05 331.31L335.62 331.98L338.29 332.52L341.03 332.92M335.82 318.41L337.55 320.30L339.19 322.33L340.74 324.49L342.21 326.77L343.59 329.18M339.01 311.79L341.58 311.89L344.19 311.83L346.84 311.62L349.53 311.27L352.26 310.76M342.60 298.73L344.86 299.96L347.07 301.34L349.24 302.87L351.37 304.56L353.46 306.39M343.22 291.57L345.65 290.72L348.06 289.72L350.45 288.57L352.83 287.26L355.19 285.79M341.82 278.09L344.37 278.42L346.93 278.90L349.51 279.54L352.11 280.33L354.72 281.28M339.73 271.15L341.71 269.51L343.62 267.73L345.46 265.82L347.24 263.76L348.94 261.57M333.73 259.00L336.23 258.42L338.80 257.98L341.44 257.68L344.15 257.52L346.93 257.50M329.33 252.91L330.76 250.77L332.09 248.53L333.30 246.16L334.41 243.69L335.42 241.10M320.11 242.99L322.34 241.72L324.68 240.56L327.12 239.52L329.67 238.59L332.33 237.78M314.06 237.89L315.05 235.52L315.92 233.06L316.66 230.51L317.27 227.87L317.76 225.13M303.10 229.93L305.05 228.25L307.12 226.67L309.32 225.18L311.64 223.77L314.09 222.47M296.05 225.47L296.82 223.02L297.46 220.49L297.96 217.88L298.33 215.19L298.56 212.42M284.40 218.54L286.19 216.70L288.11 214.93L290.16 213.24L292.35 211.63L294.67 210.10M277.03 214.40L277.64 211.91L278.11 209.34L278.44 206.70L278.63 203.99L278.69 201.22M264.96 208.25L266.62 206.29L268.42 204.40L270.36 202.58L272.43 200.84L274.65 199.16M257.56 204.92L257.80 202.36L257.90 199.76L257.84 197.10L257.64 194.39L257.30 191.63M244.73 200.58L246.09 198.40L247.59 196.27L249.25 194.19L251.05 192.16L253.00 190.18M237.25 198.87L236.85 196.33L236.29 193.78L235.59 191.22L234.72 188.65L233.70 186.06M223.73 197.84L224.51 195.39L225.45 192.95L226.54 190.53L227.78 188.12L229.18 185.72M216.41 198.37L215.21 196.10L213.85 193.87L212.35 191.68L210.70 189.53L208.89 187.42M203.30 201.80L203.24 199.23L203.33 196.62L203.57 193.98L203.96 191.29L204.50 188.56M196.80 204.85L194.85 203.17L192.78 201.59L190.58 200.09L188.25 198.69L185.81 197.38M185.83 212.81L184.84 210.44L183.97 207.97L183.24 205.42L182.62 202.78L182.14 200.04M180.87 218.09L178.46 217.20L175.97 216.44L173.39 215.80L170.72 215.30L167.97 214.92M173.36 229.37L171.61 227.50L169.94 225.49L168.36 223.36L166.86 221.09L165.45 218.70M170.29 236.23L167.73 236.06L165.12 236.04L162.47 236.17L159.77 236.45L157.02 236.88M166.33 249.19L164.11 247.89L161.94 246.44L159.81 244.85L157.73 243.11L155.69 241.21M164.95 256.97L162.40 257.30L159.83 257.78L157.25 258.42L154.66 259.21L152.04 260.15M163.53 270.45L161.11 269.60L158.70 268.60L156.31 267.44L153.93 266.13L151.57 264.66" stroke="#ff00ff"/>
<path d="M84 289h1v1h-1zM83 290h1v1h-1zM85 290h1v1h-1zM84 291h1v1h-1z" fill="#00ffff" stroke="none"/>
<path d="M244 289h1v1h-1zM243 290h1v1h-1zM245 290h1v1h-1zM244 291h1v1h-1z" fill="#ff00ff" stroke="none"/>
</g>
<g font-family='"Liberation Sans", sans-serif' stroke-width="0.1">
<text x="438.60" y="63.80" font-size="6.9" fill="#00e8e8" stroke="#00e8e8" textLength="58.40" lengthAdjust="spacing">Zahnrad elliptisch</text>
<text x="438.60" y="71.80" font-size="6.9" fill="#e800e8" stroke="#e800e8" textLength="49.50" lengthAdjust="spacing">Gegenrad i=1.5</text>
<text x="438.60" y="79.60" font-size="6.9" fill="#00f000" stroke="#00f000" textLength="33.90" lengthAdjust="spacing">a=120 mm</text>
<text x="440.70" y="98.90" font-size="6.9" fill="#00f000" stroke="#00f000" textLength="52.30" lengthAdjust="spacing">nicht umlaufend</text>
<text x="523.00" y="98.90" font-size="6.9" fill="#00f000" stroke="#00f000" textLength="11.46" lengthAdjust="spacing">i tot</text>
<text x="591.20" y="98.90" font-size="6.9" fill="#00f000" stroke="#00f000" textLength="18.30" lengthAdjust="spacing">1,500</text>
<text x="440.70" y="108.90" font-size="6.9" fill="#00f000" stroke="#00f000" textLength="76.80" lengthAdjust="spacing">Übersetzungsverhältnis</text>
<text x="523.00" y="108.90" font-size="6.9" fill="#00f000" stroke="#00f000" textLength="30.41" lengthAdjust="spacing">i min/max</text>
<text x="576.30" y="108.90" font-size="6.9" fill="#00f000" stroke="#00f000" textLength="17.60" lengthAdjust="spacing">1,208</text>
<text x="606.30" y="108.90" font-size="6.9" fill="#00f000" stroke="#00f000" textLength="17.70" lengthAdjust="spacing">1,839</text>
<text x="440.70" y="117.90" font-size="6.9" fill="#00f000" stroke="#00f000" textLength="47.70" lengthAdjust="spacing">Eingriffswinkel</text>
<text x="523.00" y="117.90" font-size="6.9" fill="#00f000" stroke="#00f000" textLength="17.39" lengthAdjust="spacing">alpha</text>
<text x="553.3" y="117.80" font-size="5.6" fill="#00f000">°</text>
<text x="590.80" y="117.90" font-size="6.9" fill="#00f000" stroke="#00f000" textLength="18.70" lengthAdjust="spacing">20,00</text>
<text x="440.70" y="127.90" font-size="6.9" fill="#00f000" stroke="#00f000" textLength="33.60" lengthAdjust="spacing">Zähnezahl</text>
<text x="523.00" y="127.90" font-size="6.9" fill="#00f000" stroke="#00f000">z</text>
<text x="577.80" y="127.90" font-size="6.9" fill="#00f000" stroke="#00f000" textLength="8.00" lengthAdjust="spacing">18</text>
<text x="607.90" y="127.90" font-size="6.9" fill="#00f000" stroke="#00f000" textLength="7.50" lengthAdjust="spacing">27</text>
<text x="440.70" y="136.90" font-size="6.9" fill="#00f000" stroke="#00f000" textLength="42.60" lengthAdjust="spacing">Normalmodul</text>
<text x="523.00" y="136.90" font-size="6.9" fill="#00f000" stroke="#00f000">m</text>
<text x="553.00" y="136.90" font-size="6.9" fill="#00f000" stroke="#00f000" textLength="11.90" lengthAdjust="spacing">mm</text>
<text x="590.50" y="136.90" font-size="6.9" fill="#00f000" stroke="#00f000" textLength="19.00" lengthAdjust="spacing">5,270</text>
<text x="440.70" y="146.90" font-size="6.9" fill="#00f000" stroke="#00f000" textLength="43.20" lengthAdjust="spacing">Achsabstand</text>
<text x="523.00" y="146.90" font-size="6.9" fill="#00f000" stroke="#00f000" textLength="7.91" lengthAdjust="spacing">a0</text>
<text x="553.00" y="146.90" font-size="6.9" fill="#00f000" stroke="#00f000" textLength="11.90" lengthAdjust="spacing">mm</text>
<text x="586.90" y="146.90" font-size="6.9" fill="#00f000" stroke="#00f000" textLength="26.20" lengthAdjust="spacing">119,219</text>
<text x="440.70" y="155.90" font-size="6.9" fill="#00f000" stroke="#00f000" textLength="43.20" lengthAdjust="spacing">Achsabstand</text>
<text x="523.00" y="155.90" font-size="6.9" fill="#00f000" stroke="#00f000" textLength="15.80" lengthAdjust="spacing">a def</text>
<text x="553.00" y="155.90" font-size="6.9" fill="#00f000" stroke="#00f000" textLength="11.90" lengthAdjust="spacing">mm</text>
<text x="586.90" y="155.90" font-size="6.9" fill="#00f000" stroke="#00f000" textLength="26.20" lengthAdjust="spacing">120,000</text>
<text x="440.70" y="165.90" font-size="6.9" fill="#00f000" stroke="#00f000" textLength="34.50" lengthAdjust="spacing">Zahnbreite</text>
<text x="523.00" y="165.90" font-size="6.9" fill="#00f000" stroke="#00f000">b</text>
<text x="553.00" y="165.90" font-size="6.9" fill="#00f000" stroke="#00f000" textLength="11.90" lengthAdjust="spacing">mm</text>
<text x="575.70" y="165.90" font-size="6.9" fill="#00f000" stroke="#00f000" textLength="18.20" lengthAdjust="spacing">20,00</text>
<text x="605.90" y="165.90" font-size="6.9" fill="#00f000" stroke="#00f000" textLength="18.10" lengthAdjust="spacing">20,00</text>
<text x="440.70" y="174.90" font-size="6.9" fill="#00f000" stroke="#00f000" textLength="62.20" lengthAdjust="spacing">Umfang Wälzkurve</text>
<text x="523.00" y="174.90" font-size="6.9" fill="#00f000" stroke="#00f000">U</text>
<text x="553.00" y="174.90" font-size="6.9" fill="#00f000" stroke="#00f000" textLength="11.90" lengthAdjust="spacing">mm</text>
<text x="571.60" y="174.90" font-size="6.9" fill="#00f000" stroke="#00f000" textLength="25.90" lengthAdjust="spacing">298,033</text>
<text x="601.70" y="174.90" font-size="6.9" fill="#00f000" stroke="#00f000" textLength="25.90" lengthAdjust="spacing">447,050</text>
<text x="440.70" y="184.90" font-size="6.9" fill="#00f000" stroke="#00f000" textLength="60.70" lengthAdjust="spacing">Radius Wälzkurve</text>
<text x="523.00" y="184.90" font-size="6.9" fill="#00f000" stroke="#00f000" textLength="15.30" lengthAdjust="spacing">r min</text>
<text x="553.00" y="184.90" font-size="6.9" fill="#00f000" stroke="#00f000" textLength="11.90" lengthAdjust="spacing">mm</text>
<text x="573.60" y="184.90" font-size="6.9" fill="#00f000" stroke="#00f000" textLength="22.30" lengthAdjust="spacing">42,000</text>
<text x="603.70" y="184.90" font-size="6.9" fill="#00f000" stroke="#00f000" textLength="22.60" lengthAdjust="spacing">65,219</text>
<text x="440.70" y="193.90" font-size="6.9" fill="#00f000" stroke="#00f000" textLength="60.70" lengthAdjust="spacing">Radius Wälzkurve</text>
<text x="523.00" y="193.90" font-size="6.9" fill="#00f000" stroke="#00f000" textLength="17.50" lengthAdjust="spacing">r max</text>
<text x="553.00" y="193.90" font-size="6.9" fill="#00f000" stroke="#00f000" textLength="11.90" lengthAdjust="spacing">mm</text>
<text x="573.60" y="193.90" font-size="6.9" fill="#00f000" stroke="#00f000" textLength="22.30" lengthAdjust="spacing">54,000</text>
<text x="603.70" y="193.90" font-size="6.9" fill="#00f000" stroke="#00f000" textLength="22.60" lengthAdjust="spacing">77,219</text>
<text x="440.70" y="203.90" font-size="6.9" fill="#00f000" stroke="#00f000" textLength="60.70" lengthAdjust="spacing">Radius Wälzkurve</text>
<text x="523.00" y="203.90" font-size="6.9" fill="#00f000" stroke="#00f000" textLength="17.90" lengthAdjust="spacing">r nom</text>
<text x="553.00" y="203.90" font-size="6.9" fill="#00f000" stroke="#00f000" textLength="11.90" lengthAdjust="spacing">mm</text>
<text x="573.60" y="203.90" font-size="6.9" fill="#00f000" stroke="#00f000" textLength="22.50" lengthAdjust="spacing">47,433</text>
<text x="604.00" y="203.90" font-size="6.9" fill="#00f000" stroke="#00f000" textLength="22.30" lengthAdjust="spacing">71,150</text>
<text x="440.70" y="213.90" font-size="6.9" fill="#00f000" stroke="#00f000" textLength="43.20" lengthAdjust="spacing">Nennleistung</text>
<text x="523.00" y="213.90" font-size="6.9" fill="#00f000" stroke="#00f000">P</text>
<text x="553.00" y="213.90" font-size="6.9" fill="#00f000" stroke="#00f000" textLength="10.80" lengthAdjust="spacing">kW</text>
<text x="592.30" y="213.90" font-size="6.9" fill="#00f000" stroke="#00f000" textLength="18.40" lengthAdjust="spacing">0,105</text>
<text x="440.70" y="222.90" font-size="6.9" fill="#00f000" stroke="#00f000" textLength="56.60" lengthAdjust="spacing">Nenndrehmoment</text>
<text x="523.00" y="222.90" font-size="6.9" fill="#00f000" stroke="#00f000">T</text>
<text x="553.00" y="222.90" font-size="6.9" fill="#00f000" stroke="#00f000" textLength="11.00" lengthAdjust="spacing">Nm</text>
<text x="576.70" y="222.90" font-size="6.9" fill="#00f000" stroke="#00f000" textLength="17.20" lengthAdjust="spacing">100,0</text>
<text x="603.70" y="222.90" font-size="6.9" fill="#00f000" stroke="#00f000" textLength="18.70" lengthAdjust="spacing">f (phi)</text>
<text x="440.70" y="232.90" font-size="6.9" fill="#00f000" stroke="#00f000" textLength="27.90" lengthAdjust="spacing">Drehzahl</text>
<text x="523.00" y="232.90" font-size="6.9" fill="#00f000" stroke="#00f000">n</text>
<text x="553.00" y="232.90" font-size="6.9" fill="#00f000" stroke="#00f000" textLength="18.00" lengthAdjust="spacing">1/min</text>
<text x="581.90" y="232.90" font-size="6.9" fill="#00f000" stroke="#00f000" textLength="7.80" lengthAdjust="spacing">10</text>
<text x="603.70" y="232.90" font-size="6.9" fill="#00f000" stroke="#00f000" textLength="18.70" lengthAdjust="spacing">f (phi)</text>
<text x="440.70" y="241.90" font-size="6.9" fill="#00f000" stroke="#00f000" textLength="93.50" lengthAdjust="spacing">Sicherh. Zahnfußdauerbruch</text>
<text x="523.00" y="241.90" font-size="6.9" fill="#00f000" stroke="#00f000" textLength="21.00" lengthAdjust="spacing">SFmin</text>
<text x="577.80" y="241.90" font-size="6.9" fill="#00f000" stroke="#00f000" textLength="14.60" lengthAdjust="spacing">7,62</text>
<text x="607.90" y="241.90" font-size="6.9" fill="#00f000" stroke="#00f000" textLength="14.50" lengthAdjust="spacing">8,33</text>
<text x="440.70" y="251.90" font-size="6.9" fill="#00f000" stroke="#00f000" textLength="38.40" lengthAdjust="spacing">bei phi1 = ?</text>
<text x="523.00" y="251.90" font-size="6.9" fill="#00f000" stroke="#00f000" textLength="26.00" lengthAdjust="spacing">phi1 SF</text>
<text x="553.3" y="250.80" font-size="5.6" fill="#00f000">°</text>
<text x="579.60" y="251.90" font-size="6.9" fill="#00f000" stroke="#00f000" textLength="8.60" lengthAdjust="spacing">66</text>
<text x="609.80" y="251.90" font-size="6.9" fill="#00f000" stroke="#00f000" textLength="8.70" lengthAdjust="spacing">66</text>
<text x="440.70" y="260.90" font-size="6.9" fill="#00f000" stroke="#00f000" textLength="83.30" lengthAdjust="spacing">Sicherh. Grübchenbildung</text>
<text x="523.00" y="260.90" font-size="6.9" fill="#00f000" stroke="#00f000" textLength="21.80" lengthAdjust="spacing">SHmin</text>
<text x="577.80" y="260.90" font-size="6.9" fill="#00f000" stroke="#00f000" textLength="14.00" lengthAdjust="spacing">1,71</text>
<text x="607.90" y="260.90" font-size="6.9" fill="#00f000" stroke="#00f000" textLength="14.50" lengthAdjust="spacing">1,87</text>
<text x="440.70" y="270.90" font-size="6.9" fill="#00f000" stroke="#00f000" textLength="38.40" lengthAdjust="spacing">bei phi1 = ?</text>
<text x="523.00" y="270.90" font-size="6.9" fill="#00f000" stroke="#00f000" textLength="26.70" lengthAdjust="spacing">phi1 SH</text>
<text x="553.3" y="269.80" font-size="5.6" fill="#00f000">°</text>
<text x="579.60" y="270.90" font-size="6.9" fill="#00f000" stroke="#00f000" textLength="8.60" lengthAdjust="spacing">66</text>
<text x="609.80" y="270.90" font-size="6.9" fill="#00f000" stroke="#00f000" textLength="8.70" lengthAdjust="spacing">66</text>
<text x="440.70" y="289.90" font-size="6.9" fill="#00f000" stroke="#00f000" textLength="85.30" lengthAdjust="spacing">Wälzkurve Rad 1 : Ellipse</text>
<text x="440.70" y="299.90" font-size="6.9" fill="#00f000" stroke="#00f000" textLength="52.40" lengthAdjust="spacing">halbe Länge a =</text>
<text x="499.30" y="299.90" font-size="6.9" fill="#00f000" stroke="#00f000" textLength="21.80" lengthAdjust="spacing">54,000</text>
<text x="440.70" y="308.90" font-size="6.9" fill="#00f000" stroke="#00f000" textLength="51.70" lengthAdjust="spacing">halbe Breite b =</text>
<text x="498.10" y="308.90" font-size="6.9" fill="#00f000" stroke="#00f000" textLength="21.70" lengthAdjust="spacing">42,000</text>
</g>
<path d="M439.5 92.50H628.5M598.5 101.50V111.50M439.5 101.50H628.5M439.5 111.50H628.5M598.5 120.50V130.50M439.5 120.50H628.5M439.5 130.50H628.5M439.5 139.50H628.5M439.5 149.50H628.5M598.5 158.50V168.50M439.5 158.50H628.5M598.5 168.50V177.50M439.5 168.50H628.5M598.5 177.50V187.50M439.5 177.50H628.5M598.5 187.50V196.50M439.5 187.50H628.5M598.5 196.50V206.50M439.5 196.50H628.5M439.5 206.50H628.5M598.5 216.50V225.50M439.5 216.50H628.5M598.5 225.50V235.50M439.5 225.50H628.5M598.5 235.50V244.50M439.5 235.50H628.5M598.5 244.50V254.50M439.5 244.50H628.5M598.5 254.50V263.50M439.5 254.50H628.5M598.5 263.50V273.50M439.5 263.50H628.5M439.5 273.50H628.5M439.5 92.0V274.00M521.5 92.0V274.00M551.5 92.0V274.00M568.5 92.0V274.00M628.5 92.0V274.00M439.5 283.50H628.5M439.5 292.50H628.5M439.5 302.50H628.5M439.5 311.50H628.5M439.5 283.0V312.0M628.5 283.0V312.0" stroke="#ffff00" stroke-width="1" fill="none" shape-rendering="crispEdges"/>
<g font-family='"Liberation Sans", sans-serif'>
<text x="55.30" y="420.00" font-size="7.4" fill="#00f000" textLength="79.00" lengthAdjust="spacing">Wälzkurven der Zahnräder</text>
</g>
<rect x="0" y="416" width="642" height="1" fill="#1883d7"/>
</svg>
</body></html>
